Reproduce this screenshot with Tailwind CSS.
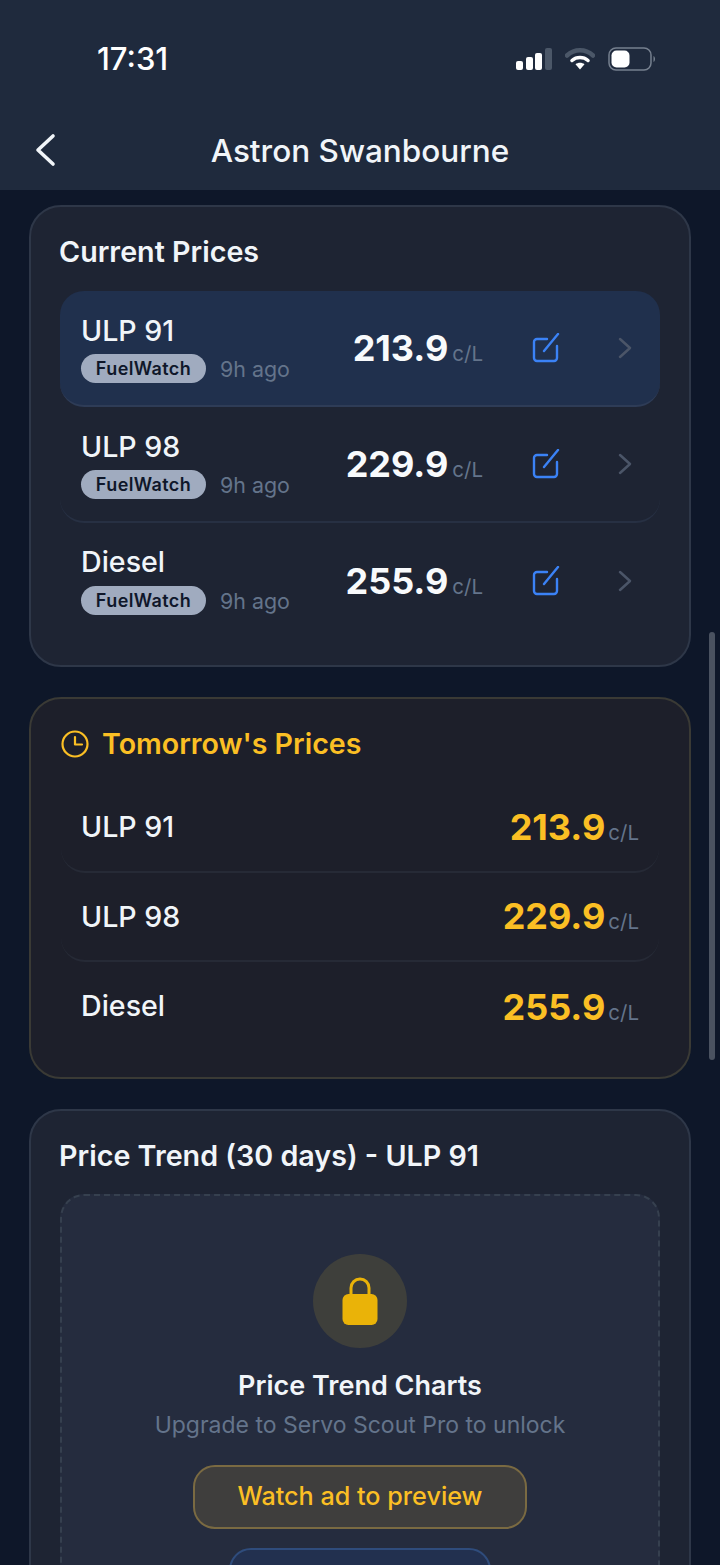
<!DOCTYPE html>
<html lang="en">
<head>
  <meta charset="UTF-8" />
  <meta name="viewport" content="width=device-width, initial-scale=1.0"/>
  <title>Astron Swanbourne</title>
  <script src="https://cdn.jsdelivr.net/npm/@tailwindcss/browser@4"></script>
</head>
<body class="relative bg-[#0e1729] h-[1565px] overflow-hidden font-['Inter',sans-serif] text-[#f1f5f9]">

  <!-- Header -->
  <header class="h-[190px] bg-[#1f2a3d] flex flex-col">
    <div class="h-[118px] flex items-center justify-between pl-[97px] pr-[64px]">
      <span class="text-[31px] font-medium text-white">17:31</span>
      <div class="flex items-center gap-[13px]">
        <svg width="36" height="22" viewBox="0 0 36 22">
          <rect x="0" y="13" width="7" height="9" rx="2" fill="#fff"/>
          <rect x="10" y="9" width="7" height="13" rx="2" fill="#fff"/>
          <rect x="19" y="5" width="7" height="17" rx="2" fill="#fff"/>
          <rect x="29" y="0" width="7" height="22" rx="2" fill="#4b5768"/>
        </svg>
        <svg width="30" height="22" viewBox="0 0 30 22">
          <path d="M2 7.5C9.5 0.5 20.5 0.5 28 7.5" fill="none" stroke="#4b5768" stroke-width="4.5" stroke-linecap="round"/>
          <path d="M7 12.5C11.5 8.6 18.500 8.600 23 12.500" fill="none" stroke="#fff" stroke-width="3.5" stroke-linecap="round"/>
          <path d="M10.500 16.200C13 14.200 17 14.200 19.500 16.200L15 21.500Z" fill="#fff"/>
        </svg>
        <svg width="48" height="24" viewBox="0 0 48 24">
          <rect x="1" y="1" width="42" height="22" rx="7" fill="none" stroke="#76808f" stroke-width="1.500"/>
          <rect x="3.500" y="3.500" width="18" height="17" rx="5" fill="#fff"/>
          <path d="M45.500 9C47.500 10 47.500 14 45.500 15Z" fill="#76808f"/>
        </svg>
      </div>
    </div>
    <div class="relative flex-1 flex items-start justify-center">
      <svg class="absolute left-[34px] top-[15px]" width="22" height="34" viewBox="0 0 22 34">
        <path d="M19 3L4 17L19 31" fill="none" stroke="#f1f5f9" stroke-width="3.600" stroke-linecap="round" stroke-linejoin="round"/>
      </svg>
      <h1 class="text-[31.5px] leading-[66px] font-medium">Astron Swanbourne</h1>
    </div>
  </header>

  <main class="px-[29px] pt-[15px] flex flex-col gap-[30px]">

    <!-- Current prices -->
    <section class="bg-[#1e2433] border-2 border-[#2e3748] rounded-[32px] h-[462px] pt-[28px] px-[29px]">
      <h2 class="text-[28.7px] leading-[34px] font-semibold -ml-[1px]">Current Prices</h2>
      <div class="mt-[22px] flex flex-col">

        <div class="h-[116px] bg-[#20304d] rounded-[24px] border-b-2 border-[#2e3c57] flex items-center pl-[21px]">
          <div class="w-[252px] mt-[1px]">
            <div class="text-[28.6px] leading-[36px] font-medium">ULP 91</div>
            <div class="flex items-center gap-[14px] mt-[4px]">
              <span class="w-[125px] h-[29px] rounded-full bg-[#a0abbf] text-[#0f172a] text-[18px] font-semibold tracking-[0.4px] flex items-center justify-center">FuelWatch</span>
              <span class="text-[21.4px] text-[#64748b] leading-[29px] mt-[2px]">9h ago</span>
            </div>
          </div>
          <div class="w-[150px] flex items-baseline justify-end">
            <span class="text-[36px] font-bold text-[#f8fafc]">213.9</span>
            <span class="text-[20.5px] text-[#64748b] ml-[4px]">c/L</span>
          </div>
          <svg class="ml-[49px]" width="28" height="30" viewBox="0 0 28 30"><path d="M15 6H5a3 3 0 0 0-3 3V25a3 3 0 0 0 3 3H22a3 3 0 0 0 3-3V13M12 18L26 1" fill="none" stroke="#3b82f6" stroke-width="2.400" stroke-linecap="round"/></svg>
          <svg class="ml-[58px]" width="14" height="22" viewBox="0 0 14 22"><path d="M2 2L12 11L2 20" fill="none" stroke="#4b5568" stroke-width="2.500" stroke-linecap="round" stroke-linejoin="round"/></svg>
        </div>

        <div class="h-[116px] rounded-[24px] border-b-2 border-[#273043] flex items-center pl-[21px]">
          <div class="w-[252px] mt-[1px]">
            <div class="text-[28.6px] leading-[36px] font-medium">ULP 98</div>
            <div class="flex items-center gap-[14px] mt-[4px]">
              <span class="w-[125px] h-[29px] rounded-full bg-[#a0abbf] text-[#0f172a] text-[18px] font-semibold tracking-[0.4px] flex items-center justify-center">FuelWatch</span>
              <span class="text-[21.4px] text-[#64748b] leading-[29px] mt-[2px]">9h ago</span>
            </div>
          </div>
          <div class="w-[150px] flex items-baseline justify-end">
            <span class="text-[36px] font-bold text-[#f8fafc]">229.9</span>
            <span class="text-[20.5px] text-[#64748b] ml-[4px]">c/L</span>
          </div>
          <svg class="ml-[49px]" width="28" height="30" viewBox="0 0 28 30"><path d="M15 6H5a3 3 0 0 0-3 3V25a3 3 0 0 0 3 3H22a3 3 0 0 0 3-3V13M12 18L26 1" fill="none" stroke="#3b82f6" stroke-width="2.400" stroke-linecap="round"/></svg>
          <svg class="ml-[58px]" width="14" height="22" viewBox="0 0 14 22"><path d="M2 2L12 11L2 20" fill="none" stroke="#4b5568" stroke-width="2.500" stroke-linecap="round" stroke-linejoin="round"/></svg>
        </div>

        <div class="h-[115px] flex items-center pl-[21px]">
          <div class="w-[252px] -mt-[1px]">
            <div class="text-[28.6px] leading-[36px] font-medium">Diesel</div>
            <div class="flex items-center gap-[14px] mt-[5px]">
              <span class="w-[125px] h-[29px] rounded-full bg-[#a0abbf] text-[#0f172a] text-[18px] font-semibold tracking-[0.4px] flex items-center justify-center">FuelWatch</span>
              <span class="text-[21.4px] text-[#64748b] leading-[29px] mt-[2px]">9h ago</span>
            </div>
          </div>
          <div class="w-[150px] flex items-baseline justify-end">
            <span class="text-[36px] font-bold text-[#f8fafc]">255.9</span>
            <span class="text-[20.5px] text-[#64748b] ml-[4px]">c/L</span>
          </div>
          <svg class="ml-[49px]" width="28" height="30" viewBox="0 0 28 30"><path d="M15 6H5a3 3 0 0 0-3 3V25a3 3 0 0 0 3 3H22a3 3 0 0 0 3-3V13M12 18L26 1" fill="none" stroke="#3b82f6" stroke-width="2.400" stroke-linecap="round"/></svg>
          <svg class="ml-[58px]" width="14" height="22" viewBox="0 0 14 22"><path d="M2 2L12 11L2 20" fill="none" stroke="#4b5568" stroke-width="2.500" stroke-linecap="round" stroke-linejoin="round"/></svg>
        </div>
      </div>
    </section>

    <!-- Tomorrow's prices -->
    <section class="bg-[#1d1f2a] border-2 border-[#3a3a35] rounded-[32px] h-[382px] pt-[28px] px-[30px]">
      <div class="flex items-center gap-[13px]">
        <svg width="28" height="28" viewBox="0 0 28 28"><circle cx="14" cy="14" r="12.500" fill="none" stroke="#fbbf24" stroke-width="2.200"/><path d="M14 7V14.500H21" fill="none" stroke="#fbbf24" stroke-width="2.200" stroke-linecap="round" stroke-linejoin="round"/></svg>
        <h2 class="text-[28.6px] leading-[34px] font-semibold text-[#fbbf24]">Tomorrow's Prices</h2>
      </div>
      <div class="mt-[22px] flex flex-col">
        <div class="h-[89.5px] border-b-2 border-[#262a36] rounded-[24px] flex items-center justify-between px-[20px]">
          <span class="text-[28.6px] font-medium mt-[2px]">ULP 91</span>
          <div class="flex items-baseline">
            <span class="text-[36px] font-bold text-[#fbbf24]">213.9</span>
            <span class="text-[20.5px] text-[#64748b] ml-[3px]">c/L</span>
          </div>
        </div>
        <div class="h-[89.5px] border-b-2 border-[#262a36] rounded-[24px] flex items-center justify-between px-[20px]">
          <span class="text-[28.6px] font-medium mt-[2px]">ULP 98</span>
          <div class="flex items-baseline">
            <span class="text-[36px] font-bold text-[#fbbf24]">229.9</span>
            <span class="text-[20.5px] text-[#64748b] ml-[3px]">c/L</span>
          </div>
        </div>
        <div class="h-[89.5px] flex items-center justify-between px-[20px]">
          <span class="text-[28.6px] font-medium">Diesel</span>
          <div class="flex items-baseline">
            <span class="text-[36px] font-bold text-[#fbbf24]">255.9</span>
            <span class="text-[20.5px] text-[#64748b] ml-[3px]">c/L</span>
          </div>
        </div>
      </div>
    </section>

    <!-- Price trend -->
    <section class="bg-[#1e2433] border-2 border-[#2e3748] rounded-[32px] h-[600px] pt-[28px] px-[29px]">
      <h2 class="text-[28.7px] leading-[34px] font-semibold -ml-[1px]">Price Trend (30 days) - ULP 91</h2>
      <div class="mt-[21px] h-[500px] bg-[#252c3e] border-2 border-dashed border-[#36404f] rounded-[24px] flex flex-col items-center pt-[58px]">
        <div class="w-[94px] h-[94px] rounded-full bg-[#3e3f3b] flex items-center justify-center">
          <svg width="36" height="48" viewBox="0 0 36 48">
            <path d="M9 22V11a9 9 0 0 1 18 0V22" fill="none" stroke="#eab308" stroke-width="3"/>
            <rect x="0.500" y="17" width="35" height="31" rx="6" fill="#eab308"/>
          </svg>
        </div>
        <div class="mt-[21px] text-[27px] leading-[34px] font-semibold">Price Trend Charts</div>
        <div class="mt-[5px] text-[23px] leading-[34px] text-[#64748b]">Upgrade to Servo Scout Pro to unlock</div>
        <button class="mt-[23px] w-[334px] h-[64px] rounded-[22px] bg-[#3f3e3d] border-2 border-[#7a6a42] text-[#fbbf24] text-[25.2px] font-medium">Watch ad to preview</button>
        <button class="mt-[19px] w-[262px] h-[64px] rounded-[22px] bg-[#22304f] border-2 border-[#2f4c7c]"></button>
      </div>
    </section>
  </main>

  <!-- Scroll indicator -->
  <div class="absolute left-[709px] top-[632px] w-[6px] h-[428px] rounded-full bg-[#4a5260]"></div>

</body>
</html>
